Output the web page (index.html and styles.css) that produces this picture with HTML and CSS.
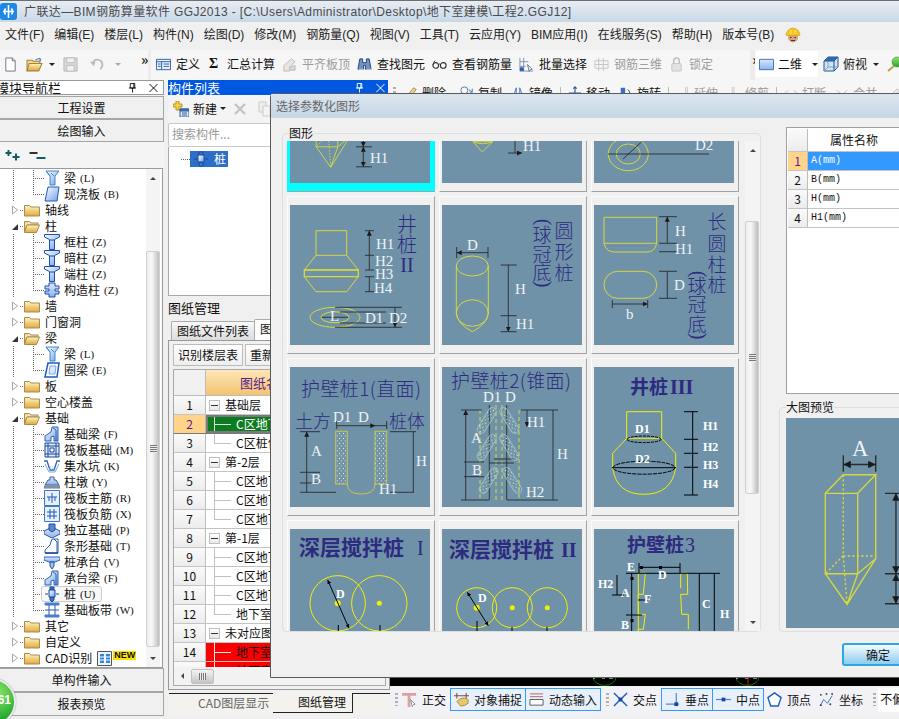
FILE: index.html
```html
<!DOCTYPE html>
<html lang="zh-CN">
<head>
<meta charset="utf-8">
<title>广联达—BIM钢筋算量软件 GGJ2013</title>
<link rel="stylesheet" href="styles.css">
</head>
<body>
<svg class="defs" aria-hidden="true">
  <defs>
    <linearGradient id="fy" x1="0" y1="0" x2="0" y2="1"><stop offset="0" stop-color="#fff3c0"/><stop offset="1" stop-color="#e0a93a"/></linearGradient>
    <linearGradient id="fb" x1="0" y1="0" x2="1" y2="1"><stop offset="0" stop-color="#ffffff"/><stop offset="1" stop-color="#6f9fe6"/></linearGradient>
    <linearGradient id="fc" x1="0" y1="0" x2="0" y2="1"><stop offset="0" stop-color="#dbe8fa"/><stop offset="1" stop-color="#8fb2ea"/></linearGradient>
    <linearGradient id="fg" x1="0" y1="0" x2="0" y2="1"><stop offset="0" stop-color="#8ce86a"/><stop offset="1" stop-color="#2e9e2e"/></linearGradient>
    <marker id="ar" viewBox="0 0 6 6" refX="6" refY="3" markerWidth="5" markerHeight="5" orient="auto-start-reverse" markerUnits="userSpaceOnUse"><path d="M0 0L6 3L0 6z" fill="#1a1a1a"/></marker>
    <marker id="arb" viewBox="0 0 6 6" refX="6" refY="3" markerWidth="4" markerHeight="4" orient="auto-start-reverse" markerUnits="userSpaceOnUse"><path d="M0 0L6 3L0 6z" fill="#000"/></marker>
    <pattern id="dots" width="4" height="5" patternUnits="userSpaceOnUse"><circle cx="1.5" cy="1.5" r=".7" fill="#dfe9d8"/><circle cx="3.3" cy="3.8" r=".6" fill="#dfe9d8"/></pattern>

    <symbol id="i-pin" viewBox="0 0 10 11"><path d="M2.500 .5h5v5h-5zM1 5.500h8M5 5.500v5" fill="none" stroke="currentColor"/><path d="M6.500 .5v5" stroke="currentColor"/></symbol>
    <symbol id="i-close" viewBox="0 0 9 9"><path d="M.5 .5l8 8M8.500 .5l-8 8" fill="none" stroke="currentColor"/></symbol>
    <symbol id="i-folder" viewBox="0 0 16 14"><path d="M.5 2.500h5l1.500 1.500h8.500v9h-15z" fill="url(#fy)" stroke="#a58d50"/></symbol>
    <symbol id="i-folder-open" viewBox="0 0 16 14"><path d="M.5 2.500h5l1.500 1.500h7v2h-11l-2.500 7z" fill="#f4e2a8" stroke="#a58d50"/><path d="M3 6h12.500l-3 7.500h-12z" fill="url(#fy)" stroke="#a58d50"/></symbol>
    <symbol id="i-tri-c" viewBox="0 0 8 10"><path d="M1.500 1l5 4-5 4z" fill="#fff" stroke="#a6a6a6"/></symbol>
    <symbol id="i-tri-o" viewBox="0 0 8 10"><path d="M7 3v6h-6z" fill="#333"/></symbol>
    <symbol id="i-col" viewBox="0 0 16 16"><path d="M.5 .5h15v2.500l-5 2.500v10h-5v-10l-5-2.500z" fill="url(#fb)" stroke="#1d4fae"/><path d="M6 6h4" stroke="#1d4fae"/></symbol>
    <symbol id="i-beam" viewBox="0 0 16 16"><path d="M2 1h13l-4 5v9h-5v-9z" fill="url(#fb)" stroke="#3d86c9"/><path d="M2 1l4 5M7 3l3 3" stroke="#3d86c9" fill="none"/></symbol>
    <symbol id="i-slab" viewBox="0 0 16 16"><path d="M4 1h11l-2 14h-12z" fill="url(#fb)" stroke="#1d5cc0"/></symbol>
    <symbol id="i-ring" viewBox="0 0 16 16"><path d="M4 1h11l-2 14h-12z" fill="#fff" stroke="#1d5cc0" stroke-width="1.500"/><path d="M6 4h6l-1 8h-6z" fill="#dce9fb" stroke="#7aa5e0"/></symbol>
    <symbol id="i-gz" viewBox="0 0 16 16"><path d="M5 1h6v3h4v3h-4v2h4v3h-4v3h-6v-3h-4v-3h4v-2h-4v-3h4z" fill="url(#fc)" stroke="#1d4fae"/></symbol>
    <symbol id="i-jcl" viewBox="0 0 16 16"><path d="M1 15v-5l6-4 1-5h6v14h-4v-5l-3 1v4z" fill="url(#fb)" stroke="#2a63b8"/><path d="M9 2l3 2v11" stroke="#2a63b8" fill="none"/></symbol>
    <symbol id="i-raft" viewBox="0 0 16 16"><path d="M1 1h14v14h-14z" fill="#dfe9fa" stroke="#16489c"/><path d="M1 4h14M1 12h14M4 1v14M12 1v14" stroke="#16489c" fill="none"/><path d="M6 6h4v4h-4z" fill="#fff" stroke="#16489c"/></symbol>
    <symbol id="i-sump" viewBox="0 0 16 16"><path d="M0 3h3l3 9h4l3-9h3" fill="none" stroke="#2a63b8" stroke-width="1.300"/><path d="M1 6l4 8h6l4-8" fill="none" stroke="#7fa6de"/><path d="M6 9h4M5 11h6" stroke="#9db9e2" stroke-dasharray="1 1"/></symbol>
    <symbol id="i-dun" viewBox="0 0 16 16"><path d="M6 3h4v3h2l3 5h-14l3-5h2z" fill="url(#fc)" stroke="#3a5f98"/><path d="M0 12h16v2h-16z" fill="#9aa5b5" stroke="#6d7888"/></symbol>
    <symbol id="i-main" viewBox="0 0 16 16"><path d="M.5 .5h15v15h-15z" fill="#e7f0fc" stroke="#3c78cc"/><path d="M8 3v10M3 7h10M5 7v4M11 7v4" stroke="#2059b4" fill="none"/></symbol>
    <symbol id="i-neg" viewBox="0 0 16 16"><path d="M.5 .5h15v15h-15z" fill="#e7f0fc" stroke="#3c78cc"/><path d="M6 3v10M10 3v10M3 6h10M3 10h10" stroke="#2059b4" fill="none"/></symbol>
    <symbol id="i-ind" viewBox="0 0 16 16"><path d="M0 9l8-4 8 4v3l-8 4-8-4z" fill="url(#fc)" stroke="#2959a8"/><path d="M5 2h6v6l-3 2-3-2z" fill="#5b86c8" stroke="#1d4fae"/></symbol>
    <symbol id="i-strip" viewBox="0 0 16 16"><path d="M1 15v-3l5-5 2-6h6v14z" fill="#fff" stroke="#2a63b8"/><path d="M10 1l3 3v11" fill="none" stroke="#2a63b8"/><path d="M1 15h13" stroke="#16489c" stroke-width="1.500"/></symbol>
    <symbol id="i-cap" viewBox="0 0 16 16"><path d="M0 3h16v3l-5 2h-6l-5-2z" fill="url(#fc)" stroke="#2a63b8"/><path d="M6 8h4v4l-2 3-2-3z" fill="#a5c0e8" stroke="#1d4fae"/></symbol>
    <symbol id="i-pile" viewBox="0 0 16 16"><path d="M6 1h4v3h-4zM6 11h4v3l-2 2-2-2z" fill="#3f74c8" stroke="#16489c"/><path d="M5 4h6v7h-6z" fill="url(#fb)" stroke="#16489c"/><path d="M1 8h3M12 8h3" stroke="#16489c"/></symbol>
    <symbol id="i-band" viewBox="0 0 16 16"><path d="M1 1h14v2h-14zM1 13h14v2h-14z" fill="#4a7ccc" stroke="#4a7ccc"/><path d="M5 3v10M11 3v10M1 8h14" stroke="#2a5fb0" fill="none"/></symbol>

    <symbol id="th-prism" viewBox="0 0 140 140">
      <g fill="none" stroke="#d8d83c" stroke-width=".9">
        <path d="M26.200 50.200h21.600v53.600h-21.600zM26.200 50.200l12-12.400h21.600l-12 12.400M59.800 37.800v56l-12 10M26.200 103.800l14.500 20.500 7.100-20.500M40.700 124.300l19.100-30.500"/>
        <path d="M38.200 37.800v54l-12 12M38.200 92h21.600M38.200 92l2.500 32" stroke-dasharray="1.500 1.500"/>
      </g>
      <g class="dm" fill="none">
        <path d="M38.200 24.800v11M59.800 24.800v11M66 50.200h16M66 103.800h16M66 123.800h16"/>
        <path d="M38.200 31h21.600" marker-start="url(#ar)" marker-end="url(#ar)"/>
        <path d="M73.300 50.200v53.600" marker-start="url(#ar)" marker-end="url(#ar)"/>
        <path d="M73.300 103.800v20" marker-start="url(#ar)" marker-end="url(#ar)"/>
      </g>
      <text class="wt" x="44" y="25" font-size="20">A</text>
      <text class="wt" x="85" y="83">H</text>
      <text class="wt" x="80" y="120">H1</text>
    </symbol>
  </defs>
</svg>

<div class="app">
  <header class="titlebar">
    <svg class="logo" viewBox="0 0 17 17"><rect width="17" height="17" rx="3" fill="#1e88e5"/><path d="M8.500 2v13M3 8.500h11M5.500 5.500q-2 3 0 6M11.500 5.500q2 3 0 6" fill="none" stroke="#fff" stroke-width="1.600"/></svg>
    <span class="title-text">广联达—BIM钢筋算量软件 GGJ2013 - [C:\Users\Administrator\Desktop\地下室建模\工程2.GGJ12]</span>
  </header>

  <nav class="menubar">
    <span>文件(F)</span><span>编辑(E)</span><span>楼层(L)</span><span>构件(N)</span><span>绘图(D)</span><span>修改(M)</span><span>钢筋量(Q)</span><span>视图(V)</span><span>工具(T)</span><span>云应用(Y)</span><span>BIM应用(I)</span><span>在线服务(S)</span><span>帮助(H)</span><span>版本号(B)</span>
    <svg class="hat" viewBox="0 0 16 16"><circle cx="8" cy="10.500" r="5" fill="#d9a27a"/><path d="M1 8.500a7 7.500 0 0 1 14 0z" fill="#f4c51f" stroke="#c99a10" stroke-width=".5"/><path d="M6 3v4M10 3v4" stroke="#fbe78a"/><path d="M5 10.500h1.500M9.500 10.500h1.500M6 13.500h4" stroke="#333"/></svg>
  </nav>

  <div class="toolbar">
    <div class="tb-seg tb-file">
      <svg class="ic" viewBox="0 0 16 16"><path d="M3 1h7l3 3v11h-10z" fill="#fff" stroke="#6b7480"/><path d="M10 1v3h3" fill="#dde" stroke="#6b7480"/></svg>
      <svg class="ic ic-open" viewBox="0 0 16 14"><path d="M1 3h5l1 1h6v2h-9l-3 7z" fill="#f5dc90" stroke="#a0843c"/><path d="M3 6h12l-3 7h-11z" fill="url(#fy)" stroke="#a0843c"/><path d="M9 3q2-2 5-1M14 2l-2-1M14 2l-1 2" stroke="#3b78c4" fill="none"/></svg>
      <i class="caret dark"></i>
      <svg class="ic ic-save" viewBox="0 0 16 16"><path d="M1 1h14v14h-14z" fill="#d8d8d8" stroke="#b5b5b5"/><path d="M4 1h8v5h-8zM4 9h8v6h-8z" fill="#f1f1f1" stroke="#bdbdbd"/></svg>
      <b class="sep"></b>
      <svg class="ic ic-undo" viewBox="0 0 16 16"><path d="M3 7q1-5 6-4t4 7l-2 3" fill="none" stroke="#bcbcbc" stroke-width="2"/><path d="M0 5l6 0-2 5z" fill="#bcbcbc"/></svg>
      <i class="caret grey"></i>
      <span class="more">»</span>
    </div>
    <div class="tb-seg tb-main">
      <span class="tbi"><svg class="ic" viewBox="0 0 16 14"><path d="M.5 1.500h15v11h-15z" fill="#eaf1fb" stroke="#2c5fa8"/><path d="M.5 4h15M6 4v8.500M8 6.500h6M8 9h6M2 6.500h3M2 9h3" stroke="#2c5fa8" fill="none"/></svg>定义</span>
      <span class="tbi sum"><b class="sigma">Σ</b>汇总计算</span>
      <span class="tbi off"><svg class="ic" viewBox="0 0 16 16"><path d="M2 9l8-7 4 3-6 6v4h-6z" fill="#e6e6e6" stroke="#bdbdbd"/><path d="M8 11l6-2v5h-6z" fill="#d6d6d6" stroke="#bdbdbd"/></svg>平齐板顶</span>
      <span class="tbi"><svg class="ic" viewBox="0 0 16 16"><path d="M3 2h3v4h4v-4h3l2 11h-6v-4h-2v4h-6z" fill="#6e93c9" stroke="#26406e"/><path d="M2 13h5M10 13h5" stroke="#dce7f6"/></svg>查找图元</span>
      <span class="tbi"><svg class="ic" viewBox="0 0 16 12"><circle cx="4" cy="7" r="3" fill="#fff" stroke="#333" stroke-width="1.200"/><circle cx="12" cy="7" r="3" fill="#fff" stroke="#333" stroke-width="1.200"/><path d="M7 6q1-1 2 0M1 6l2-4" stroke="#333" fill="none"/></svg>查看钢筋量</span>
      <span class="tbi"><svg class="ic" viewBox="0 0 16 16"><path d="M1 1v14h14M1 5h9M1 10h6M5 1v14" fill="none" stroke="#7f90a8"/><path d="M1 11h4v4h-4z" fill="#2d5fb5"/><path d="M9 8l5 5-2 .5-1 2z" fill="#fff" stroke="#5f7390"/></svg>批量选择</span>
      <span class="tbi off"><svg class="ic" viewBox="0 0 16 16"><path d="M1 4h14v8h-14zM5 1v14M10 1v14M1 8h14" fill="none" stroke="#c4c4c4"/></svg>钢筋三维</span>
      <span class="tbi off"><svg class="ic" viewBox="0 0 16 16"><path d="M5 7v-3a3 3 0 0 1 6 0v3" fill="none" stroke="#bdbdbd" stroke-width="1.500"/><rect x="3" y="7" width="10" height="8" rx="1" fill="#e2e2e2" stroke="#c4c4c4"/></svg>锁定</span>
      <span class="more tail">»</span>
    </div>
    <div class="tb-seg tb-view">
      <span class="tb-pick"><svg class="ic" viewBox="0 0 16 12"><path d="M.5 .5h15v11h-15z" fill="url(#fc)" stroke="#3a6fc0"/></svg>二维<i class="caret dark"></i></span>
      <svg class="ic ic-cube" viewBox="0 0 16 16"><path d="M1 5l4-4h10v10l-4 4h-10z" fill="#cfe3f5" stroke="#26578e"/><path d="M5 1v10h10M5 11l-4 4" stroke="#7fa3c8" fill="none"/><path d="M1 5h10v10M11 5l4-4" stroke="#26578e" fill="none"/><path d="M5 1h10l-4 4h-10z" fill="#2f6aa8"/></svg>
      <span class="tbt">俯视</span><i class="caret dark"></i>
      <svg class="ic ic-green" viewBox="0 0 16 16"><circle cx="10" cy="6" r="5" fill="url(#fg)" stroke="#2a7d2a" stroke-width=".5"/><path d="M1 15l6-5" stroke="#b5a23c" stroke-width="2"/></svg>
    </div>
  </div>

  <main class="workspace">
    <aside class="nav">
      <div class="panel-head light"><span class="clip-left">模块导航栏</span><span class="head-btns"><svg><use href="#i-pin"/></svg><svg><use href="#i-close"/></svg></span></div>
      <div class="nav-btn">工程设置</div>
      <div class="nav-btn">绘图输入</div>
      <div class="expand-row">
        <svg viewBox="0 0 16 12" class="plusminus"><path d="M0 3h6M3 0v6M7 7h7M10.500 3.500v7" stroke="#0e5f5f" stroke-width="2" fill="none"/></svg>
        <svg viewBox="0 0 16 12" class="plusminus"><path d="M0 3h8" stroke="#333" stroke-width="2"/><path d="M7 8h9" stroke="#0e5f5f" stroke-width="2"/></svg>
      </div>
      <div class="tree">
        <div class="tree-rows">
          <div class="tn child"><svg class="ti"><use href="#i-beam"/></svg><span>梁</span><small>(L)</small></div>
          <div class="tn child last"><svg class="ti"><use href="#i-slab"/></svg><span>现浇板</span><small>(B)</small></div>
          <div class="tn top"><svg class="tw"><use href="#i-tri-c"/></svg><svg class="tf"><use href="#i-folder"/></svg><span>轴线</span></div>
          <div class="tn top"><svg class="tw"><use href="#i-tri-o"/></svg><svg class="tf"><use href="#i-folder-open"/></svg><span>柱</span></div>
          <div class="tn child"><svg class="ti"><use href="#i-col"/></svg><span>框柱</span><small>(Z)</small></div>
          <div class="tn child"><svg class="ti"><use href="#i-col"/></svg><span>暗柱</span><small>(Z)</small></div>
          <div class="tn child"><svg class="ti"><use href="#i-col"/></svg><span>端柱</span><small>(Z)</small></div>
          <div class="tn child last"><svg class="ti"><use href="#i-gz"/></svg><span>构造柱</span><small>(Z)</small></div>
          <div class="tn top"><svg class="tw"><use href="#i-tri-c"/></svg><svg class="tf"><use href="#i-folder"/></svg><span>墙</span></div>
          <div class="tn top"><svg class="tw"><use href="#i-tri-c"/></svg><svg class="tf"><use href="#i-folder"/></svg><span>门窗洞</span></div>
          <div class="tn top"><svg class="tw"><use href="#i-tri-o"/></svg><svg class="tf"><use href="#i-folder-open"/></svg><span>梁</span></div>
          <div class="tn child"><svg class="ti"><use href="#i-beam"/></svg><span>梁</span><small>(L)</small></div>
          <div class="tn child last"><svg class="ti"><use href="#i-ring"/></svg><span>圈梁</span><small>(E)</small></div>
          <div class="tn top"><svg class="tw"><use href="#i-tri-c"/></svg><svg class="tf"><use href="#i-folder"/></svg><span>板</span></div>
          <div class="tn top"><svg class="tw"><use href="#i-tri-c"/></svg><svg class="tf"><use href="#i-folder"/></svg><span>空心楼盖</span></div>
          <div class="tn top"><svg class="tw"><use href="#i-tri-o"/></svg><svg class="tf"><use href="#i-folder-open"/></svg><span>基础</span></div>
          <div class="tn child"><svg class="ti"><use href="#i-jcl"/></svg><span>基础梁</span><small>(F)</small></div>
          <div class="tn child"><svg class="ti"><use href="#i-raft"/></svg><span>筏板基础</span><small>(M)</small></div>
          <div class="tn child"><svg class="ti"><use href="#i-sump"/></svg><span>集水坑</span><small>(K)</small></div>
          <div class="tn child"><svg class="ti"><use href="#i-dun"/></svg><span>柱墩</span><small>(Y)</small></div>
          <div class="tn child"><svg class="ti"><use href="#i-main"/></svg><span>筏板主筋</span><small>(R)</small></div>
          <div class="tn child"><svg class="ti"><use href="#i-neg"/></svg><span>筏板负筋</span><small>(X)</small></div>
          <div class="tn child"><svg class="ti"><use href="#i-ind"/></svg><span>独立基础</span><small>(P)</small></div>
          <div class="tn child"><svg class="ti"><use href="#i-strip"/></svg><span>条形基础</span><small>(T)</small></div>
          <div class="tn child"><svg class="ti"><use href="#i-cap"/></svg><span>桩承台</span><small>(V)</small></div>
          <div class="tn child"><svg class="ti"><use href="#i-jcl"/></svg><span>承台梁</span><small>(F)</small></div>
          <div class="tn child"><span class="cur-box"><svg class="ti"><use href="#i-pile"/></svg><span>桩</span><small>(U)</small></span></div>
          <div class="tn child last"><svg class="ti"><use href="#i-band"/></svg><span>基础板带</span><small>(W)</small></div>
          <div class="tn top"><svg class="tw"><use href="#i-tri-c"/></svg><svg class="tf"><use href="#i-folder"/></svg><span>其它</span></div>
          <div class="tn top"><svg class="tw"><use href="#i-tri-c"/></svg><svg class="tf"><use href="#i-folder"/></svg><span>自定义</span></div>
          <div class="tn top"><svg class="tw"><use href="#i-tri-c"/></svg><svg class="tf"><use href="#i-folder"/></svg><span>CAD识别</span>
            <svg class="cad-ic" viewBox="0 0 15 15"><path d="M.5 .5h14v14h-14z" fill="#eef4fc" stroke="#555"/><path d="M3 3h4v9h-4zM9 3h4v9h-4z" fill="#2f86d8"/><path d="M3 6h4M3 9h4M9 6h4M9 9h4" stroke="#fff"/></svg>
            <b class="new-tag">NEW</b>
          </div>
        </div>
        <div class="vbar tree-vbar">
          <i class="arr up"></i>
          <div class="vbar-track vbar-tree"><div class="vbar-thumb"><i class="grip"></i></div></div>
          <i class="arr down"></i>
        </div>
      </div>
      <div class="nav-btn lower">单构件输入</div>
      <div class="nav-btn lower">报表预览</div>
    </aside>

    <section class="mid">
      <div class="panel-head blue"><span>构件列表</span><span class="head-btns"><svg><use href="#i-pin"/></svg><svg><use href="#i-close"/></svg></span></div>
      <div class="mid-tools">
        <svg class="ic" viewBox="0 0 16 16"><path d="M3 0h3v3h3v3h-3v3h-3v-3h-3v-3h3z" fill="#f4d23a" stroke="#b8952a"/><path d="M7 8h9v8h-9z" fill="#dce7f5" stroke="#35619e"/><path d="M7 8h9v2h-9zM9 12h5M9 14h5" fill="#3d74c0" stroke="#35619e"/></svg>
        <span>新建</span><i class="caret dark"></i>
        <svg class="ic-x" viewBox="0 0 14 14"><path d="M2 2l10 10M12 2l-10 10" stroke="#c4c4c4" stroke-width="2.400"/></svg>
        <svg class="ic" viewBox="0 0 16 16"><path d="M3 1h7v10h-7z" fill="#eee" stroke="#ccc"/><path d="M7 5h7v10h-7z" fill="#f4f4f4" stroke="#ccc"/></svg>
      </div>
      <div class="search">搜索构件...</div>
      <div class="comp-list">
        <div class="comp-row"><i class="dots-h"></i><span class="comp-sel"><svg class="ti"><use href="#i-pile"/></svg><span>桩</span></span></div>
      </div>
      <div class="panel-head plain"><span>图纸管理</span></div>
      <div class="tabs">
        <span class="tab">图纸文件列表</span><span class="tab on">图纸楼层构件列表</span>
      </div>
      <div class="tab-body">
        <div class="sheet-tools"><span class="sbtn">识别楼层表</span><span class="sbtn">重新定位</span></div>
        <div class="sheet">
          <div class="sheet-rows">
            <div class="sr head"><span class="rn"></span><span class="rc">图纸名称</span></div>
            <div class="sr"><span class="rn">1</span><span class="rc lv0 firstg"><i class="box"></i>基础层</span></div>
            <div class="sr picked"><span class="rn">2</span><span class="rc leaf">C区地下室结构图</span></div>
            <div class="sr"><span class="rn">3</span><span class="rc leaf end">C区桩位图</span></div>
            <div class="sr"><span class="rn">4</span><span class="rc lv0"><i class="box"></i>第-2层</span></div>
            <div class="sr"><span class="rn">5</span><span class="rc leaf">C区地下二层</span></div>
            <div class="sr"><span class="rn">6</span><span class="rc leaf">C区地下二层</span></div>
            <div class="sr"><span class="rn">7</span><span class="rc leaf end">C区地下二层</span></div>
            <div class="sr"><span class="rn">8</span><span class="rc lv0"><i class="box"></i>第-1层</span></div>
            <div class="sr"><span class="rn">9</span><span class="rc leaf">C区地下一层</span></div>
            <div class="sr"><span class="rn">10</span><span class="rc leaf">C区地下一层</span></div>
            <div class="sr"><span class="rn">11</span><span class="rc leaf">C区地下一层</span></div>
            <div class="sr"><span class="rn">12</span><span class="rc leaf end">地下室结构</span></div>
            <div class="sr"><span class="rn">13</span><span class="rc lv0"><i class="box"></i>未对应图纸</span></div>
            <div class="sr red"><span class="rn">14</span><span class="rc leaf">地下室结构</span></div>
            <div class="sr red"><span class="rn">15</span><span class="rc leaf">地下室结构</span></div>
          </div>
          <div class="hbar"><i class="arr left"></i><span class="hthumb"><i class="grip-v"></i></span><i class="arr small-down"></i></div>
        </div>
      </div>
      <div class="bottom-tabs"><span class="btab">CAD图层显示</span><span class="btab on">图纸管理</span><span class="btab-rest"></span></div>
    </section>

    <section class="work">
      <div class="edit-tools">
        <span class="grip-dots"></span>
        <span class="et et-del"><svg class="ic" viewBox="0 0 16 16"><path d="M3 12l8-10 3 2-8 10z" fill="#e9d58a" stroke="#9c8a4a"/></svg>删除</span>
        <span class="et"><svg class="ic" viewBox="0 0 16 16"><circle cx="5" cy="5" r="4" fill="none" stroke="#58708e"/><path d="M10 4l4 3M14 3v4h-3" fill="none" stroke="#3a6fc0"/></svg>复制</span>
        <span class="et"><svg class="ic" viewBox="0 0 16 16"><path d="M2 14l4-12v12zM14 14l-4-12v12z" fill="none" stroke="#3a6fc0"/></svg>镜像</span>
        <b class="vsep"></b>
        <span class="et"><svg class="ic" viewBox="0 0 16 16"><path d="M8 1v14M1 8h14M6 3l2-2 2 2M6 13l2 2 2-2" stroke="#2d5a98" fill="none" stroke-width="1.300"/></svg>移动</span>
        <span class="et"><svg class="ic" viewBox="0 0 16 16"><path d="M2 2h5v12h-5z" fill="#3a6fc0"/><path d="M10 4q4 3 1 9" stroke="#333" fill="none"/></svg>旋转</span>
        <b class="vsep"></b>
        <span class="et off"><svg class="ic" viewBox="0 0 16 16"><path d="M0 11h9M11 1v14M13 1v14" stroke="#c4c4c4" fill="none"/></svg>延伸</span>
        <span class="et off"><svg class="ic" viewBox="0 0 16 16"><path d="M0 11h16M8 1v14M6 1v14" stroke="#c4c4c4" fill="none"/></svg>修剪</span>
        <b class="vsep"></b>
        <span class="et off"><svg class="ic" viewBox="0 0 16 16"><path d="M1 8l4-3M15 8l-4-3M1 8l4 3M15 8l-4 3" stroke="#bbb" fill="none"/></svg>打断</span>
        <span class="et off"><svg class="ic" viewBox="0 0 16 16"><path d="M6 8l-4-3M10 8l4-3M6 8l-4 3M10 8l4 3" stroke="#bbb" fill="none"/></svg>合并</span>
        <svg class="ic" viewBox="0 0 16 16"><path d="M2 13l10-10 2 2-10 10z" fill="#eee" stroke="#bbb"/></svg>
      </div>
      <div class="canvas">
        <svg class="canvas-arcs" viewBox="0 0 509 9" preserveAspectRatio="xMinYMax">
          <path d="M203 0a11 8 0 0 0 23 0" fill="none" stroke="#0a7a0a"/>
          <path d="M346 0a11 8 0 0 0 23 0" fill="none" stroke="#0a7a0a"/>
          <path d="M358 0v8" stroke="#e01010"/>
          <path d="M203 1h2M212 1h3M219 1h4M346 1h2M355 1h3M363 1h4" stroke="#fff"/>
        </svg>
      </div>
      <footer class="status">
        <span class="grip-dots"></span>
        <span class="st"><svg class="ic" viewBox="0 0 16 16"><path d="M0 1h15v3h-6v12h-3v-12h-6z" fill="#dca0a0"/><path d="M9 8l5 5-2 .5-1 2z" fill="#fff" stroke="#889"/></svg>正交</span>
        <span class="st on"><svg class="ic" viewBox="0 0 16 16"><path d="M3 1v6M13 1v6M0 4h16" stroke="#7a3b3b"/><path d="M3 10q6-6 12-2v4q-3 3-8 3z" fill="#e7c670" stroke="#a98a3a"/></svg>对象捕捉</span>
        <span class="st on"><svg class="ic" viewBox="0 0 16 16"><path d="M1 2h14M1 5h14" stroke="#b06060" fill="none"/><path d="M1 8h14v6h-14z" fill="#fff" stroke="#555"/></svg>动态输入</span>
        <span class="grip-dots"></span>
        <span class="st"><svg class="ic" viewBox="0 0 16 16"><path d="M1 1l14 14M15 1l-14 14" stroke="#1d5cc0" stroke-width="1.500"/><rect x="6" y="6" width="4" height="4" fill="#16489c"/></svg>交点</span>
        <span class="st on"><svg class="ic" viewBox="0 0 16 16"><path d="M1 13h14M12 1v14" stroke="#5a86c8" stroke-width="1.300"/><rect x="10" y="11" width="4" height="4" fill="#16489c"/></svg>垂点</span>
        <span class="st on"><svg class="ic" viewBox="0 0 16 16"><path d="M0 8h16" stroke="#5a86c8" stroke-width="1.300"/><rect x="6" y="6" width="4" height="4" fill="#16489c"/></svg>中点</span>
        <span class="st"><svg class="ic" viewBox="0 0 16 16"><path d="M8 1l7 5-3 9h-8l-3-9z" fill="#fff" stroke="#1d5cc0" stroke-width="1.500"/></svg>顶点</span>
        <span class="st"><svg class="ic" viewBox="0 0 16 16"><path d="M1 15l4-7 4 4 5-8" stroke="#3a6fc0" fill="none"/><g fill="#333"><circle cx="2" cy="3" r="1"/><circle cx="8" cy="2" r="1"/><circle cx="14" cy="2" r="1"/><circle cx="2" cy="14" r="1"/><circle cx="12" cy="13" r="1"/></g></svg>坐标</span>
        <span class="grip-dots tail-grip"></span>
        <span class="st-white">不偏移</span>
      </footer>
    </section>
  </main>

  <div class="badge"><span>61</span></div>

  <div class="dialog">
    <div class="dlg-title">选择参数化图形</div>
    <div class="dlg-body">
      <fieldset class="group-shapes">
        <legend>图形</legend>
        <div class="thumb-view">
          <div class="thumb-grid">
            <div class="cell sel"><svg class="thumb" viewBox="0 0 140 140"><use href="#th-prism" width="140" height="140"/></svg></div>
            <div class="cell"><svg class="thumb" viewBox="0 0 140 140">
              <path d="M31 98.700h19.700l-10.400 10.300zM31 98.700q9 4 19.700 0" fill="none" stroke="#d8d83c" stroke-width=".9"/>
              <path class="dm" d="M73 98v12M66 110h14" fill="none" marker-end="url(#ar)"/>
              <text class="wt" x="81" y="108">H1</text></svg></div>
            <div class="cell"><svg class="thumb" viewBox="0 0 140 140">
              <g fill="none" stroke="#d8d83c"><ellipse cx="34.300" cy="111" rx="20" ry="16.700"/><ellipse cx="34.300" cy="111" rx="12" ry="10"/></g>
              <path class="dm" d="M29 116l18.700-17.300M14 111h101" fill="none"/>
              <text class="wt" x="101" y="107">D2</text></svg></div>

            <div class="cell"><svg class="thumb" viewBox="0 0 140 140">
              <g fill="none" stroke="#d8d83c"><path d="M26 25.700h30.700v24.600h-30.700zM26 50.300l-11.700 14.700h54l-11.600-14.700M14.300 71.700l11.700 15h30.700l11.600-15"/><path d="M14.300 65h54v6.700h-54z" stroke-width="1.300"/><ellipse cx="45" cy="112.300" rx="25" ry="10"/><ellipse cx="45" cy="112.300" rx="14" ry="5.500"/></g>
              <g class="dm" fill="none"><path d="M75 25.700h9M75 50.300h9M75 65h9M75 71.700h9M75 86.700h9M45 102.300h67M45 122.300h67M50 107h46M50 118h46"/>
              <path d="M79.300 25.700v24.600M79.300 50.300v14.700M79.300 71.700v15M31.700 112.300h26.600M105 102.300v20" marker-start="url(#ar)" marker-end="url(#ar)"/></g>
              <text class="wt" x="86" y="44">H1</text><text class="wt" x="85" y="61">H2</text><text class="wt" x="85" y="74">H3</text><text class="wt" x="84" y="88">H4</text>
              <text class="wt" x="40" y="116">L</text><text class="wt" x="75" y="118">D1</text><text class="wt" x="99" y="118">D2</text>
              <text class="ct" font-size="20" x="117 117" y="27 47" text-anchor="middle">井桩</text><text class="ct-lat" x="117" y="67" text-anchor="middle">II</text></svg></div>
            <div class="cell"><svg class="thumb" viewBox="0 0 140 140">
              <g fill="none" stroke="#d8d83c"><ellipse cx="30.300" cy="61" rx="16" ry="10"/><path d="M14.300 61v47M46.300 61v47M14.300 108q1 11 16 18.700q15-7.700 16-18.700"/><ellipse cx="30.300" cy="108" rx="16" ry="13.300"/></g>
              <g class="dm" fill="none"><path d="M14.700 42v11M46 42v11M58.700 60h16M58.700 110.700h16M58.700 126.700h16"/><path d="M14.700 47.700h31.300M66.300 60v50.700M66.300 110.700v16" marker-start="url(#ar)" marker-end="url(#ar)"/></g>
              <text class="wt" x="25" y="45">D</text><text class="wt" x="73" y="89">H</text><text class="wt" x="74" y="124">H1</text>
              <text class="ct" font-size="19" x="122 122 122" y="33 54 75" text-anchor="middle">圆形桩</text>
              <text class="ct" font-size="19" x="100 100 100" y="37 57 75" text-anchor="middle">球冠底</text>
              <text class="ct-p" x="95" y="17" transform="rotate(90 95 17)" text-anchor="middle">(</text><text class="ct-p" x="95" y="79" transform="rotate(90 95 79)" text-anchor="middle">)</text></svg></div>
            <div class="cell"><svg class="thumb" viewBox="0 0 140 140">
              <g fill="none" stroke="#d8d83c"><path d="M10 12.300h52.700v26h-52.700zM10 38.300q2 8.700 10 8.700h33q8 0 9.700-8.700"/><rect x="10" y="66.300" width="52.700" height="27" rx="13.500"/></g>
              <g class="dm" fill="none"><path d="M65 11.700h18M65 38.300h18M65 46.700h18M65 66.300h18M65 93.300h18M18.300 95v8M53.700 95v8"/><path d="M73.300 11.700v26.600M73.300 66.300v27M18.300 99h35.400" marker-start="url(#ar)" marker-end="url(#ar)"/></g>
              <text class="wt" x="81" y="31">H</text><text class="wt" x="81" y="49">H1</text><text class="wt" x="80" y="85">D</text><text class="wt" x="32" y="114">b</text>
              <text class="ct" font-size="19" x="123 123 123 123" y="24 46 67 87" text-anchor="middle">长圆柱桩</text>
              <text class="ct" font-size="19" x="103 103 103" y="88 107 127" text-anchor="middle">球冠底</text>
              <text class="ct-p" x="98" y="69" transform="rotate(90 98 69)" text-anchor="middle">(</text><text class="ct-p" x="98" y="131" transform="rotate(90 98 131)" text-anchor="middle">)</text></svg></div>

            <div class="cell"><svg class="thumb" viewBox="0 0 140 140">
              <text class="ct" font-size="19" letter-spacing=".4" x="11" y="29">护壁桩1(直面)</text>
              <text class="ct" font-size="18" x="5" y="61">土方</text><text class="ct" font-size="18" x="99" y="61">桩体</text>
              <text class="wt" x="43" y="55">D1</text><text class="wt" x="68" y="55">D</text>
              <g stroke="#c6c64a" fill="url(#dots)"><rect x="45.700" y="64.300" width="11.600" height="52.700"/><rect x="85" y="64.300" width="11.700" height="52.700"/></g>
              <path d="M57.300 117q0 10 13.800 10t13.900-10" fill="none" stroke="#c6c64a"/>
              <g class="dm" fill="none"><path d="M10 64.700h20M10 105.300h20M10 116h20M10 125.300h36M100 64.700h26M100 125.300h24M46.700 54v8M96.700 54v8"/><path d="M16.700 64.700v40.600M16.700 105.300v20M123.300 64.700v60.600M57.300 58.700h28" marker-start="url(#ar)" marker-end="url(#ar)"/><path d="M46.700 58.700h10.600M85 58.700h11.700"/></g>
              <text class="wt" x="21" y="89">A</text><text class="wt" x="21" y="117">B</text><text class="wt" x="126" y="99">H</text><text class="wt" x="89" y="127">H1</text></svg></div>
            <div class="cell"><svg class="thumb" viewBox="0 0 140 140">
              <text class="ct" font-size="19" letter-spacing=".4" x="9" y="21">护壁桩2(锥面)</text>
              <text class="wt" font-size="14" x="41" y="35">D1 D</text>
              <g stroke="#d8d83c" fill="none" stroke-dasharray="4 3"><path d="M38 43v90M77 43v90M54 38v96M60 38v96"/></g>
              <g class="dm" fill="none"><path d="M19 43h21M79 43h37M47.300 38v95M64.700 38v95M19 133h28M65 133h51M22 95h20M22 109.700h20M52 92h20M47 96h25"/><path d="M23.700 43v52.300M23.700 95.300v14.400M23.700 109.700v23.300M111 43v90M85 43v17" marker-start="url(#ar)" marker-end="url(#ar)"/></g>
              <g stroke="#a9cfc0" stroke-opacity=".7" fill="url(#dots)"><rect x="41" y="39" width="8" height="29" rx="4" transform="rotate(32 45 53)"/><rect x="63" y="39" width="8" height="29" rx="4" transform="rotate(-32 67 53)"/><rect x="41" y="66" width="8" height="29" rx="4" transform="rotate(32 45 80)"/><rect x="63" y="66" width="8" height="29" rx="4" transform="rotate(-32 67 80)"/><rect x="43" y="99" width="8" height="29" rx="4" transform="rotate(32 47 113)"/><rect x="66" y="99" width="8" height="29" rx="4" transform="rotate(-32 70 113)"/></g>
              <text class="wt" x="29" y="76">A</text><text class="wt" x="30" y="108">B</text><text class="wt" x="115" y="92">H</text><text class="wt" x="85" y="60">H1</text><text class="wt" x="84" y="130">H2</text></svg></div>
            <div class="cell"><svg class="thumb" viewBox="0 0 140 140">
              <text class="ct bd" font-size="19" x="36" y="27">井桩</text><text class="ct-lat bd" x="76" y="27" font-size="19">III</text>
              <path d="M32.700 44.700h35v26.600h-35zM32.700 71.300l-14 15v15q4 26 31.300 26t31.700-26v-15l-14-15" fill="none" stroke="#f0f000"/>
              <g fill="none" stroke="#000"><ellipse cx="50" cy="72.300" rx="17" ry="3.300" stroke-dasharray="3 1"/><ellipse cx="50" cy="100.700" rx="31" ry="6.500" stroke-dasharray="4 1"/><path d="M18 100.700h64M98.700 44.700v83.300M90 44.700h14M90 72.300h14M90 86.300h14M90 100.300h14M90 128h14"/></g>
              <g class="wb"><text x="41" y="66">D1</text><text x="41" y="96">D2</text><text x="109" y="63">H1</text><text x="109" y="84">H2</text><text x="109" y="102">H3</text><text x="109" y="121">H4</text></g></svg></div>

            <div class="cell"><svg class="thumb" viewBox="0 0 140 140">
              <text class="ct bd" font-size="21" x="9" y="26">深层搅拌桩</text><text class="ct-lat" x="127" y="26" font-size="20">I</text>
              <g fill="none" stroke="#f0f000"><circle cx="47.700" cy="74.300" r="27.700"/><circle cx="89.300" cy="74.300" r="27.700"/></g>
              <circle cx="47.700" cy="74.300" r="3" fill="#f0f000"/><circle cx="89.300" cy="74.300" r="2.500" fill="#f0f000"/>
              <path d="M37.700 51l21.300 48.300" stroke="#000" marker-start="url(#arb)" marker-end="url(#arb)"/><path d="M48.300 96v20M90 96v20" stroke="#000"/>
              <text class="wb" x="46" y="69">D</text></svg></div>
            <div class="cell"><svg class="thumb" viewBox="0 0 140 140">
              <text class="ct bd" font-size="21" x="7" y="28">深层搅拌桩</text><text class="ct-lat bd" x="119" y="28" font-size="20">II</text>
              <g fill="none" stroke="#f0f000"><circle cx="34.700" cy="78.700" r="20"/><circle cx="70.300" cy="78.700" r="20"/><circle cx="105.300" cy="78.700" r="20"/></g>
              <g fill="#f0f000"><circle cx="34.700" cy="78.700" r="3"/><circle cx="70.300" cy="78.700" r="2.500"/><circle cx="105.300" cy="78.700" r="2.500"/></g>
              <path d="M25.300 63.300l21 33.400" stroke="#000" marker-start="url(#arb)" marker-end="url(#arb)"/><path d="M35 92v20M70 98v20M105 98v20" stroke="#000"/>
              <text class="wb" x="36" y="73">D</text></svg></div>
            <div class="cell"><svg class="thumb" viewBox="0 0 140 140">
              <text class="ct bd" font-size="19" x="33" y="23">护壁桩</text><text class="ct-lat" x="91" y="23" font-size="19">3</text>
              <g fill="none" stroke="#f0f000"><path d="M44.300 44.300h7l-2 21h-5v20h7l-2 15h-5v20M86.700 44.300h6.600l.4 21h-7l1 20h6.600v15"/><path d="M44.300 44.300v70M86.700 44.300v15"/></g>
              <g fill="none" stroke="#000"><path d="M45 38.300h41M32 44.300h94M45 34v10M86 34v10M18 66h12M32 86h16M23 46v20M37.700 44.300v60M105.300 44.300v60M120.300 44.300v60M44 71h10"/></g>
              <g fill="#000"><rect x="46" y="37" width="3" height="3"/><rect x="65" y="37" width="3" height="3"/><rect x="36.500" y="48" width="3" height="3"/><rect x="36.500" y="90" width="3" height="3"/></g>
              <g class="wb"><text x="33" y="42">E</text><text x="64" y="50">D</text><text x="4" y="59">H2</text><text x="27" y="68">A</text><text x="50" y="74">F</text><text x="27" y="100">B</text><text x="108" y="79">C</text><text x="126" y="89">H</text></g></svg></div>
          </div>
        </div>
        <div class="vbar dlg-vbar">
          <i class="arr up"></i>
          <div class="vbar-track vbar-dlg"><div class="vbar-thumb"><i class="grip"></i></div></div>
          <i class="arr down"></i>
        </div>
      </fieldset>

      <div class="dlg-right">
        <div class="props">
          <div class="pr phead"><span class="pn"></span><span class="pc">属性名称</span></div>
          <div class="pr psel"><span class="pn">1</span><span class="pc">A(mm)</span></div>
          <div class="pr"><span class="pn">2</span><span class="pc">B(mm)</span></div>
          <div class="pr"><span class="pn">3</span><span class="pc">H(mm)</span></div>
          <div class="pr"><span class="pn">4</span><span class="pc">H1(mm)</span></div>
        </div>
        <fieldset class="group-preview">
          <legend>大图预览</legend>
          <svg class="preview" viewBox="0 0 140 140"><use href="#th-prism" width="140" height="140"/></svg>
        </fieldset>
      </div>
    </div>
    <div class="dlg-foot"><button class="ok" type="button">确定</button></div>
  </div>
</div>
</body>
</html>
```

FILE: styles.css
```css
* { box-sizing: border-box; }
html, body { margin: 0; height: 100%; }
body { background: #f0f0f0; overflow: hidden; font: 12px/16px "Noto Sans CJK SC", "Liberation Sans", sans-serif; color: #111; }
.defs { position: absolute; width: 0; height: 0; }
.app { position: relative; width: 899px; height: 719px; overflow: hidden; display: flex; flex-direction: column; background: #f0f0f0; }
svg { display: block; flex: none; }

/* title */
.titlebar { height: 22px; display: flex; align-items: center; border-top: 1px solid #6f6f6f; background: linear-gradient(#e8edf3, #c8d8e8); }
.logo { width: 17px; height: 17px; margin-right: 7px; }
.title-text { color: #4a4a4a; font-family: "Liberation Sans", "Noto Sans CJK SC", sans-serif; white-space: nowrap; letter-spacing: .38px; }

/* menu */
.menubar { height: 28px; display: flex; align-items: center; gap: 10px; padding: 0 0 2px 5px; background: #f0f0f0; font-family: "Liberation Sans", "Noto Sans CJK SC", sans-serif; color: #222; white-space: nowrap; }
.hat { width: 16px; height: 16px; margin-left: 1px; }

/* main toolbar */
.toolbar { height: 30px; display: flex; background: #ececec; white-space: nowrap; }
.tb-seg { display: flex; align-items: center; background: #f6f6f6; height: 30px; padding-bottom: 2px; }
.tb-file { width: 148px; padding-left: 3px; margin-right: 3px; }
.tb-main { width: 599px; padding-left: 5px; gap: 7px; margin-right: 5px; }
.tb-view { flex: 1; }
.ic { width: 15px; height: 15px; }
.ic-open { width: 17px; margin-left: 8px; }
.ic-save { margin-left: 8px; }
.caret { width: 0; height: 0; flex: none; border: 3px solid transparent; border-bottom: 0; }
.caret.dark { border-top-color: #222; }
.caret.grey { border-top-color: #aaa; }
.tb-file .caret.dark { margin-left: 6px; }
.tb-file .caret.grey { margin-left: 10px; }
.sep { width: 1px; height: 16px; background: #cfcfcf; margin: 0 6px; }
.more { font-size: 14px; font-weight: 700; line-height: 10px; align-self: flex-start; margin: 4px 0 0 20px; color: #222; }
.more.tail { margin-left: 32px; }
.tbi { display: flex; align-items: center; gap: 5px; }
.off { color: #9c9c9c; }
.sigma { font: 700 14px "Liberation Serif", serif; width: 10px; margin-left: 2px; margin-right: 3px; }
.tb-pick { display: flex; align-items: center; gap: 4px; width: 62px; height: 26px; background: #fff; padding-left: 3px; margin-left: 1px; }
.tb-pick .caret { margin-left: 6px; }
.ic-cube { width: 16px; height: 16px; margin: 0 4px 0 5px; }
.tb-view > .caret { margin: 0 8px 0 6px; }
.ic-green { width: 16px; height: 16px; }

/* workspace */
.workspace { flex: 1; display: flex; min-height: 0; }

/* panel headers */
.panel-head { height: 15px; display: flex; justify-content: space-between; align-items: center; font-size: 13px; white-space: nowrap; overflow: hidden; }
.panel-head.light { background: #fff; border: 1px solid #999; border-left: 0; }
.panel-head.blue { background: #0058e0; color: #fff; }
.panel-head.plain { background: transparent; margin-top: 4px; }
.clip-left { margin-left: -4px; }
.head-btns { display: flex; align-items: center; gap: 12px; padding-right: 5px; }
.head-btns svg { width: 9px; height: 10px; color: #111; }
.blue .head-btns svg { color: #fff; }

/* nav column */
.nav { width: 164px; flex: none; margin-right: 4px; display: flex; flex-direction: column; }
.nav-btn { height: 23px; text-align: center; line-height: 21px; background: #f0f0f0; border: 1px solid #a6a6a6; border-left: 0; }
.nav-btn.lower { height: 24px; line-height: 21px; }
.panel-head.light + .nav-btn { margin-top: 1px; }
.expand-row { height: 26px; display: flex; gap: 7px; padding: 8px 0 0 5px; background: #f4f4f4; }
.plusminus { width: 17px; height: 12px; }
.tree { height: 500px; margin-right: 1px; display: flex; border: 1px solid #9a9a9a; border-left: 0; background: #fff; }
.tree-rows { flex: 1; padding-top: 1px; min-width: 0; overflow: hidden; }
.tn { height: 16px; display: flex; align-items: center; white-space: nowrap; }
.tn small { font: 11px "Liberation Serif", serif; margin-left: 4px; }
.top { padding-left: 11px; background: repeating-linear-gradient(90deg, #777 0 1px, transparent 1px 2px) 20px 8px / 4px 1px no-repeat; }
.tw { width: 8px; height: 10px; margin-right: 5px; }
.tf { width: 16px; height: 14px; margin-right: 5px; }
.child { padding-left: 44px; background:
  repeating-linear-gradient(#666 0 1px, transparent 1px 2px) 13px 0 / 1px 100% no-repeat,
  repeating-linear-gradient(#666 0 1px, transparent 1px 2px) 33px 0 / 1px 100% no-repeat,
  repeating-linear-gradient(90deg, #666 0 1px, transparent 1px 2px) 33px 8px / 11px 1px no-repeat; }
.child.last { background:
  repeating-linear-gradient(#666 0 1px, transparent 1px 2px) 13px 0 / 1px 100% no-repeat,
  repeating-linear-gradient(#666 0 1px, transparent 1px 2px) 33px 0 / 1px 8px no-repeat,
  repeating-linear-gradient(90deg, #666 0 1px, transparent 1px 2px) 33px 8px / 11px 1px no-repeat; }
.ti { width: 16px; height: 16px; margin-right: 4px; }
.cur-box { display: flex; align-items: center; height: 16px; margin-left: -3px; padding: 0 6px 0 2px; border: 1px solid #ccc; border-radius: 3px; background: #f8f8f8; }
.cad-ic { width: 15px; height: 15px; margin-left: 5px; }
.new-tag { font: 700 9px/9px "Liberation Sans", sans-serif; background: #ffe100; color: #111; padding: 0 1px; margin: -6px 0 0 1px; }

/* scrollbars */
.vbar { width: 16px; flex: none; display: flex; flex-direction: column; align-items: stretch; background: #f4f4f4; }
.tree-vbar { width: 14px; margin-right: 2px; }
.vbar-track { flex: 1; display: flex; flex-direction: column; }
.vbar-tree { padding: 64px 0 2px 0; }
.vbar-dlg { padding: 62px 1px 119px 0; }
.vbar-thumb { flex: 1; background: linear-gradient(90deg, #eee, #f8f8f8 40%, #bdbdbd); border: 1px solid #d0d0d0; border-radius: 2px; display: flex; align-items: center; justify-content: center; }
.grip { width: 7px; height: 8px; background: repeating-linear-gradient(#777 0 1px, #eee 1px 2px); }
.arr { flex: none; height: 18px; display: flex; align-items: center; justify-content: center; }
.arr::after { content: ""; border: 3px solid transparent; border-top: 0; border-bottom: 3px solid #444; }
.arr.down::after { border-bottom: 0; border-top: 3px solid #444; }

/* middle column */
.mid { width: 222px; flex: none; display: flex; flex-direction: column; }
.mid-tools { height: 28px; padding: 0 0 1px 5px; display: flex; align-items: center; gap: 1px; background: #f4f4f4; }
.mid-tools .ic { width: 16px; height: 16px; }
.mid-tools .ic:first-child { margin-right: 3px; }
.mid-tools .caret { margin: 0 6px 0 2px; }
.ic-x { width: 14px; height: 14px; margin-right: 8px; }
.search { height: 24px; border: 1px solid #c8c8c8; border-radius: 2px; background: #fff; color: #999; padding: 2px 0 0 3px; font-size: 12px; }
.comp-list { height: 149px; background: #fff; border: 1px solid #aaa; border-top: 0; padding-top: 4px; }
.comp-row { display: flex; align-items: center; padding-left: 12px; }
.dots-h { width: 9px; height: 1px; background: repeating-linear-gradient(90deg, #666 0 1px, transparent 1px 2px); }
.comp-sel { display: flex; align-items: center; width: 38px; height: 16px; background: #2c6fc8; color: #fff; padding-left: 3px; gap: 5px; }
.comp-sel .ti { margin: 0; }
.tabs { height: 22px; margin-top: 3px; padding-left: 3px; display: flex; align-items: flex-end; white-space: nowrap; overflow: hidden; }
.tab { height: 19px; padding: 0 5px; border: 1px solid #aaa; border-bottom: 0; border-radius: 2px 2px 0 0; background: linear-gradient(#f8f8f8, #dcdcdc); line-height: 18px; flex: none; }
.tab.on { height: 21px; background: #fff; margin-left: -1px; }
.tab-body { height: 350px; border: 1px solid #999; padding: 3px 3px 2px 4px; margin-bottom: 3px; }
.sheet-tools { height: 22px; display: flex; gap: 2px; margin-bottom: 3px; }
.sbtn { padding: 0 4px; border: 1px solid #bbb; background: linear-gradient(#fff, #efefef); line-height: 20px; white-space: nowrap; }
.sheet { height: 317px; border: 1px solid #aaa; display: flex; flex-direction: column; background: #fff; }
.sheet-rows { flex: 1; overflow: hidden; min-height: 0; }
.sr { height: 19px; display: flex; flex: none; border-bottom: 1px solid #c4c4c4; white-space: nowrap; }
.sr.head { height: 26px; border-bottom: 1px solid #bbb; }
.rn { width: 32px; flex: none; text-align: center; line-height: 18px; background: linear-gradient(#fafafa, #ececec); border-right: 1px solid #bdbdbd; }
.head .rn { background: #f0f0f0; }
.rc { flex: 1; line-height: 18px; overflow: hidden; padding-left: 30px; background: no-repeat; font-size: 12px; }
.head .rc { background: linear-gradient(#fde6b8, #f3c36e); color: #5a1a8c; font-size: 13px; line-height: 25px; padding-left: 34px; }
.lv0 { padding-left: 20px; display: flex; align-items: center; }
.box { width: 11px; height: 11px; margin: 0 5px 0 -17px; flex: none; border: 1px solid #c0c0c0; background: linear-gradient(#fff, #e8e8e8); display: flex; align-items: center; justify-content: center; }
.box::after { content: ""; width: 7px; height: 1px; background: #333; }
.leaf { background-image: linear-gradient(#c0c0c0, #c0c0c0), linear-gradient(#c0c0c0, #c0c0c0); background-size: 1px 100%, 17px 1px; background-position: 8px 0, 8px 9px; }
.leaf.end { background-size: 1px 10px, 17px 1px; }
.picked { border-bottom-color: #7a7a7a; }
.picked .rn { background: #ffd48a; color: #5a1a8c; }
.picked .rc { background-color: #0b7d20; color: #fff; box-shadow: inset 0 0 0 2px #7a7a7a; background-image: linear-gradient(#ddd, #ddd), linear-gradient(#ddd, #ddd); }
.red .rc { background-color: #fa0000; background-image: linear-gradient(#eee, #eee), linear-gradient(#eee, #eee); }
.hbar { height: 18px; flex: none; display: flex; align-items: center; background: #f2f2f2; }
.arr.left { width: 16px; }
.arr.left::after { border: 3px solid transparent; border-left: 0; border-right: 3px solid #444; }
.hthumb { width: 23px; height: 15px; background: linear-gradient(#f4f4f4, #c4c4c4); border: 1px solid #c0c0c0; border-radius: 2px; display: flex; align-items: center; justify-content: center; margin-left: 1px; }
.grip-v { width: 7px; height: 7px; background: repeating-linear-gradient(90deg, #777 0 1px, #eee 1px 2px); }
.arr.small-down { margin-left: auto; margin-right: 25px; }
.arr.small-down::after { border: 2px solid transparent; border-bottom: 0; border-top: 3px solid #777; }
.bottom-tabs { height: 21px; display: flex; padding-left: 1px; background: #f4f2ee; }
.btab { width: 104px; padding-left: 29px; line-height: 17px; color: #666; border-top: 1px solid #222; white-space: nowrap; }
.btab.on { width: 80px; padding-left: 25px; color: #111; border: 0; border-right: 1px solid #222; border-bottom: 1px solid #222; height: 20px; line-height: 18px; }
.btab-rest { flex: 1; border-top: 1px solid #222; }

/* right work column */
.work { flex: 1; min-width: 0; display: flex; flex-direction: column; }
.edit-tools { height: 26px; display: flex; align-items: center; white-space: nowrap; padding-left: 5px; background: #f6f6f6; margin-left: -2px; }
.et { display: flex; align-items: center; gap: 4px; margin-right: 9px; }
.et .ic { width: 14px; height: 14px; }
.et-del { margin-left: 8px; margin-right: 14px; }
.vsep { width: 1px; height: 13px; background: #bbb; margin: 0 7px 0 -2px; flex: none; }
.grip-dots { width: 3px; height: 13px; flex: none; background: repeating-linear-gradient(#b0b0b0 0 2px, transparent 2px 4px); }
.canvas { flex: 1; background: #000; display: flex; align-items: flex-end; min-height: 0; }
.canvas-arcs { width: 509px; height: 9px; }
.status { height: 29px; margin-top: 1px; margin-bottom: 3px; padding: 1px 0 0 5px; display: flex; align-items: flex-start; background: #f2f2f6; white-space: nowrap; }
.status .grip-dots { margin-top: 5px; }
.st { height: 23px; display: flex; align-items: center; gap: 5px; padding: 0 3px; border: 1px solid transparent; }
.st.on { background: #e8f1fb; border-color: #3399ff; margin-right: -1px; }
.status > .st + .grip-dots { margin-left: 6px; }
.status > .tail-grip { margin-left: 4px; }
.st-white { background: #fff; height: 24px; line-height: 22px; margin-left: 2px; padding-left: 2px; }

/* badge */
.badge { position: absolute; left: -32px; top: 678px; width: 48px; height: 48px; border-radius: 50%; background: radial-gradient(circle at 60% 30%, #8ee86a, #18a32b 70%); border: 2px solid #e8e8e8; box-shadow: 0 0 1px #555; display: flex; align-items: center; justify-content: flex-end; padding: 0 3px 4px 0; }
.badge span { color: #fff; font: 700 12px "Liberation Sans", sans-serif; }

/* dialog */
.dialog { position: absolute; left: 270px; top: 93px; width: 660px; height: 585px; background: #f0f0f0; border: 1px solid #5a5a5a; border-radius: 4px 4px 0 0; display: flex; flex-direction: column; }
.dlg-title { height: 24px; flex: none; padding: 4px 0 0 5px; color: #666; background: linear-gradient(#dbe5ef, #c6d6e6); }
.dlg-body { height: 514px; flex: none; display: flex; padding-top: 8px; }
fieldset { margin: 0; min-width: 0; border: 1px solid #dedede; border-radius: 4px; }
legend { padding: 0 0 2px; margin-left: 5px; font-size: 12px; line-height: 13px; color: #111; }
.group-shapes { width: 479px; height: 506px; margin-left: 11px; padding: 0 0 0 1px; display: flex; flex: none; background: #f0f0f0; }
.thumb-view { flex: 1; height: 490px; overflow: hidden; min-width: 0; }
.thumb-grid { margin-top: -107px; padding-left: 3px; display: grid; grid-template-columns: repeat(3, 148px); gap: 4px; }
.cell { width: 148px; height: 158px; padding: 8px 0 0 2px; background: #f0f0f0; border: 1px solid; border-color: #fbfbfb #a3a3a3 #a3a3a3 #fbfbfb; }
.cell.sel { background: #00ffff; border-color: #00ffff #00ffff #a3a3a3 #00ffff; }
.thumb { width: 140px; height: 140px; background: #6f92a9; }
.dm { stroke: #2b2b2b; stroke-width: .9; }
.wt { font: 15px "Liberation Serif", serif; fill: #f0f2f4; }
.wb { font: 700 12px "Liberation Serif", serif; fill: #fff; }
.ct { font-family: "Noto Sans CJK SC", sans-serif; font-weight: 300; fill: #2e2a80; }
.ct-lat { font: 20px "Liberation Serif", serif; fill: #2e2a80; }
.ct-p { font: 20px "Liberation Serif", serif; fill: #2e2a80; }
.bd { font-weight: 700; }
.dlg-vbar { width: 15px; height: 490px; }
.dlg-right { flex: none; width: 150px; margin-left: 18px; padding-top: 1px; }
.props { height: 267px; width: 180px; margin-left: 7px; background: #fff; border: 1px solid #a0a0a0; padding: 1px 0 0 1px; }
.pr { height: 19px; display: flex; border-bottom: 1px solid #c4c4c4; }
.phead { height: 23px; }
.pn { width: 20px; flex: none; text-align: center; line-height: 18px; background: linear-gradient(#fafafa, #ececec); border-right: 1px solid #bdbdbd; }
.pc { flex: 1; padding-left: 3px; font: 10px/18px "Liberation Mono", "Noto Sans CJK SC", monospace; }
.phead .pc { font: 12px/22px "Noto Sans CJK SC", sans-serif; padding-left: 22px; }
.psel .pn { background: #ffd48a; color: #5a1a8c; }
.psel .pc { background: #3399ff; color: #fff; }
.group-preview { margin-top: 6px; width: 200px; height: 232px; padding: 3px 0 0 6px; }
.group-preview legend { margin-left: 0; }
.preview { width: 210px; height: 210px; background: #6f92a9; }
.dlg-foot { flex: 1; padding: 11px 0 0 571px; }
.ok { width: 72px; height: 23px; padding: 0; border: 2px solid #2ea6e0; border-radius: 3px; background: linear-gradient(#f4fbff, #bfe3f7 50%, #8fcdf0); font: 12px "Noto Sans CJK SC", sans-serif; color: #111; }
```
